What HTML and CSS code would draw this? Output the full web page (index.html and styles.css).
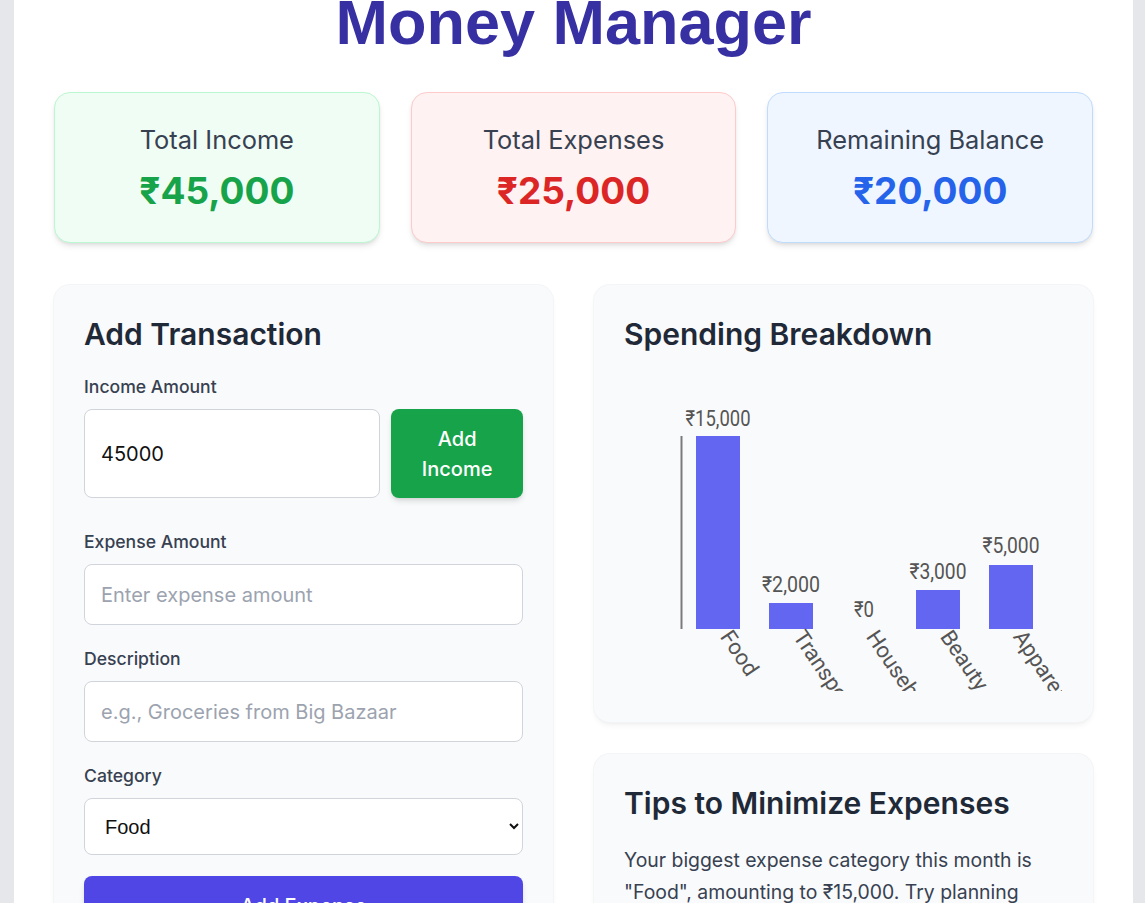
FILE: index.html
```html
<!DOCTYPE html>
<html lang="en">
<head>
<meta charset="utf-8">
<title>Money Manager</title>
<link rel="stylesheet" href="styles.css">
</head>
<body>
<div class="app">
  <h1 class="title">Money Manager</h1>

  <div class="summary">
    <div class="stat stat-income">
      <h2 class="stat-label">Total Income</h2>
      <p class="stat-amount">₹45,000</p>
    </div>
    <div class="stat stat-expense">
      <h2 class="stat-label">Total Expenses</h2>
      <p class="stat-amount">₹25,000</p>
    </div>
    <div class="stat stat-balance">
      <h2 class="stat-label">Remaining Balance</h2>
      <p class="stat-amount">₹20,000</p>
    </div>
  </div>

  <div class="main">
    <section class="panel">
      <h2 class="panel-title">Add Transaction</h2>
      <label class="field-label" for="income">Income Amount</label>
      <div class="income-row">
        <input id="income" class="field-input" type="number" value="45000">
        <button class="btn btn-income">Add Income</button>
      </div>

      <div class="field">
        <label class="field-label" for="expense">Expense Amount</label>
        <input id="expense" class="field-input" type="number" placeholder="Enter expense amount">
      </div>
      <div class="field">
        <label class="field-label" for="desc">Description</label>
        <input id="desc" class="field-input" type="text" placeholder="e.g., Groceries from Big Bazaar">
      </div>
      <div class="field field-last">
        <label class="field-label" for="cat">Category</label>
        <select id="cat" class="field-select">
          <option>Food</option>
          <option>Transport</option>
          <option>Household</option>
          <option>Beauty</option>
          <option>Apparel</option>
        </select>
      </div>
      <button class="btn btn-primary">Add Expense</button>
    </section>

    <div class="side">
      <section class="panel">
        <h2 class="panel-title">Spending Breakdown</h2>
        <svg class="chart" width="438" height="316" viewBox="0 0 438 316">
          <line x1="57.5" y1="61" x2="57.5" y2="254" stroke="#7a7a7a" stroke-width="2"/>
          <rect x="72" y="61" width="44" height="193" fill="#6366f1"/>
          <rect x="145" y="228" width="44" height="26" fill="#6366f1"/>
          <rect x="292" y="215" width="44" height="39" fill="#6366f1"/>
          <rect x="365" y="190" width="44" height="64" fill="#6366f1"/>
          <g class="chart-value">
            <text x="94" y="51" textLength="65" lengthAdjust="spacingAndGlyphs">₹15,000</text>
            <text x="167" y="217" textLength="58" lengthAdjust="spacingAndGlyphs">₹2,000</text>
            <text x="240" y="242" textLength="20" lengthAdjust="spacingAndGlyphs">₹0</text>
            <text x="314" y="204" textLength="57" lengthAdjust="spacingAndGlyphs">₹3,000</text>
            <text x="387" y="178" textLength="57" lengthAdjust="spacingAndGlyphs">₹5,000</text>
          </g>
          <g class="chart-cat">
            <text x="101" y="258" dy="0.3em" transform="rotate(56 101 258)">Food</text>
            <text x="174" y="258" dy="0.3em" transform="rotate(56 174 258)">Transport</text>
            <text x="247" y="258" dy="0.3em" transform="rotate(56 247 258)">Household</text>
            <text x="321" y="258" dy="0.3em" transform="rotate(56 321 258)">Beauty</text>
            <text x="394" y="258" dy="0.3em" transform="rotate(56 394 258)">Apparel</text>
          </g>
        </svg>
      </section>

      <section class="panel">
        <h2 class="panel-title">Tips to Minimize Expenses</h2>
        <p class="tips-text">Your biggest expense category this month is "Food", amounting to ₹15,000. Try planning your meals for the week, cooking at home more often and buying groceries in bulk to bring this number down.</p>
      </section>
    </div>
  </div>
</div>
</body>
</html>
```

FILE: styles.css
```css
html, body {
  margin: 0;
  padding: 0;
}

body {
  background: #e5e7eb;
  font-family: Inter, "Noto Sans", sans-serif;
  color: #1f2937;
}

.app {
  width: 1119px;
  margin: 0 12px 0 14px;
  background: #ffffff;
  padding: 0 40px 40px;
  box-sizing: border-box;
  min-height: 100vh;
}

.title {
  font-family: "Liberation Sans", Arial, sans-serif;
  font-weight: 700;
  font-size: 63px;
  line-height: 70px;
  color: #3730a3;
  text-align: center;
  margin: -13px 0 35px;
}

/* summary cards */
.summary {
  display: grid;
  grid-template-columns: repeat(3, 1fr);
  gap: 31px;
}

.stat {
  border: 1px solid;
  border-radius: 16px;
  padding: 31px 16px 31px;
  text-align: center;
  box-shadow: 0 4px 6px -1px rgba(0, 0, 0, 0.1), 0 2px 4px -2px rgba(0, 0, 0, 0.1);
}

.stat-income { background: #f0fdf4; border-color: #bbf7d0; }
.stat-expense { background: #fef2f2; border-color: #fecaca; }
.stat-balance { background: #eff6ff; border-color: #bfdbfe; }

.stat-label {
  font-size: 25.4px;
  line-height: 32px;
  font-weight: 400;
  color: #374151;
  margin: 0 0 15px;
}

.stat-amount {
  font-size: 37px;
  line-height: 40px;
  font-weight: 700;
  margin: 0;
}

.stat-income .stat-amount { color: #16a34a; }
.stat-expense .stat-amount { color: #dc2626; }
.stat-balance .stat-amount { color: #2563eb; }

/* main area */
.main {
  display: grid;
  grid-template-columns: 1fr 1fr;
  gap: 41px;
  margin-top: 42px;
  align-items: start;
}

.side {
  display: flex;
  flex-direction: column;
  gap: 32px;
}

.panel {
  background: #f9fafb;
  border-radius: 16px;
  padding: 31px 30px;
  box-shadow: 0 0 0 1px rgba(243, 244, 246, 0.9), 0 4px 6px -1px rgba(0, 0, 0, 0.06), 0 2px 4px -2px rgba(0, 0, 0, 0.05);
}

.panel-title {
  font-size: 30px;
  line-height: 36px;
  font-weight: 600;
  color: #1f2937;
  margin: 0 0 23px;
}

/* form */
.field-label {
  display: block;
  font-size: 17.6px;
  line-height: 24px;
  font-weight: 500;
  color: #374151;
  margin-bottom: 10px;
}

.field {
  margin-bottom: 22px;
}

.field-last {
  margin-bottom: 21px;
}

.income-row {
  display: flex;
  gap: 11px;
  margin-bottom: 32px;
}

.field-input,
.field-select {
  display: block;
  width: 100%;
  box-sizing: border-box;
  border: 1px solid #d1d5db;
  border-radius: 8px;
  background: #ffffff;
  color: #111111;
  outline: none;
}

.field-input {
  height: 61px;
  padding: 0 16px;
  font-family: Inter, "Noto Sans", sans-serif;
  font-size: 20px;
}

.field-input::placeholder {
  color: #9ca3af;
}

.income-row .field-input {
  height: auto;
  flex: 1 1 auto;
  min-width: 0;
}

.field-select {
  height: 57px;
  padding: 0 12px 0 16px;
  font-family: "Liberation Sans", Arial, sans-serif;
  font-size: 20px;
}

.btn {
  border: 0;
  border-radius: 8px;
  color: #ffffff;
  font-family: Inter, "Noto Sans", sans-serif;
  cursor: pointer;
}

.btn-income {
  flex: 0 0 30%;
  background: #16a34a;
  font-size: 20px;
  font-weight: 500;
  line-height: 30px;
  padding: 14.5px 16px;
  box-shadow: 0 4px 6px -1px rgba(0, 0, 0, 0.12), 0 2px 4px -2px rgba(0, 0, 0, 0.1);
}

.btn-primary {
  display: block;
  width: 100%;
  height: 60px;
  background: #4f46e5;
  font-size: 20px;
  font-weight: 500;
  box-shadow: 0 4px 6px -1px rgba(0, 0, 0, 0.12), 0 2px 4px -2px rgba(0, 0, 0, 0.1);
}

/* chart */
.chart {
  display: block;
  overflow: hidden;
}

.chart-value text {
  font-family: Roboto, "DejaVu Sans", sans-serif;
  font-size: 22px;
  fill: #555555;
  text-anchor: middle;
}

.chart-cat text {
  font-family: Roboto, "DejaVu Sans", sans-serif;
  font-size: 22px;
  fill: #555555;
}

/* tips */
.tips-text {
  font-size: 19.4px;
  line-height: 32px;
  color: #374151;
  margin: 1px 0 0;
}
```
